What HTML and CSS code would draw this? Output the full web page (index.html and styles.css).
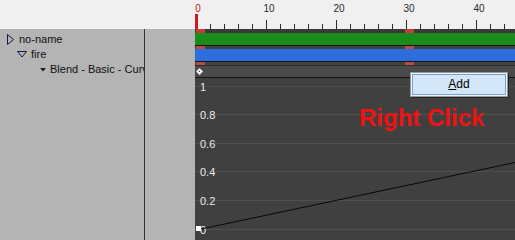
FILE: index.html
```html
<!DOCTYPE html>
<html lang="en">
<head>
    <meta charset="UTF-8">
    <title>Curve Editor</title>
    <link rel="stylesheet" href="styles.css">
</head>
<body>
    <div class="app">
        <div class="header">
            <div class="header-side"></div>
            <svg class="ruler" width="320" height="29" shape-rendering="crispEdges">
                <rect x="0" y="14" width="3" height="15" fill="#d01818"/>
                <text x="3" y="12" class="ruler-zero">0</text>
                <text x="74" y="12">10</text>
                <text x="144" y="12">20</text>
                <text x="214" y="12">30</text>
                <text x="284" y="12">40</text>
                <path class="ticks" d="M15.5 24V29 M29.5 24V29 M43.5 24V29 M57.5 24V29 M71.5 20V29 M85.5 24V29 M99.5 24V29 M113.5 24V29 M127.5 24V29 M141.5 20V29 M155.5 24V29 M169.5 24V29 M183.5 24V29 M197.5 24V29 M211.5 20V29 M225.5 24V29 M239.5 24V29 M253.5 24V29 M267.5 24V29 M281.5 20V29 M295.5 24V29 M309.5 24V29"/>
            </svg>
        </div>

        <div class="main">
            <div class="tree">
                <div class="tree-row level-1">
                    <svg class="toggle" width="7" height="11"><polygon points="0.5,0.5 6.5,5.5 0.5,10.5" fill="none" stroke="#141450"/></svg>
                    <span>no-name</span>
                </div>
                <div class="tree-row level-2">
                    <svg class="toggle" width="10" height="7"><polygon points="0.5,0.5 9.5,0.5 5,6" fill="none" stroke="#141450"/></svg>
                    <span>fire</span>
                </div>
                <div class="tree-row level-3">
                    <svg class="toggle" width="6" height="4"><polygon points="0,0 6,0 3,3.5" fill="#202020"/></svg>
                    <span>Blend - Basic - Curve</span>
                </div>
            </div>
            <div class="divider"></div>
            <div class="gutter"></div>

            <div class="timeline">
                <div class="strip">
                    <i class="mark mark-start"></i>
                    <i class="mark mark-30"></i>
                </div>
                <div class="bar bar-green"></div>
                <div class="gap">
                    <i class="mark mark-start"></i>
                    <i class="mark mark-30"></i>
                </div>
                <div class="bar bar-blue"></div>
                <div class="gap">
                    <i class="mark mark-start"></i>
                    <i class="mark mark-30"></i>
                </div>
                <div class="key-row">
                    <svg class="key" width="7" height="7"><polygon points="3.5,0 7,3.5 3.5,7 0,3.5" fill="#f4f4f4"/><rect x="3" y="3" width="1" height="1" fill="#333"/></svg>
                </div>
                <svg class="graph" width="320" height="162">
                    <g class="grid" shape-rendering="crispEdges">
                        <line x1="0" y1="8.5" x2="320" y2="8.5"/>
                        <line x1="0" y1="36.5" x2="320" y2="36.5"/>
                        <line x1="0" y1="65.5" x2="320" y2="65.5"/>
                        <line x1="0" y1="93.5" x2="320" y2="93.5"/>
                        <line x1="0" y1="122.5" x2="320" y2="122.5"/>
                        <line x1="0" y1="151.5" x2="320" y2="151.5"/>
                    </g>
                    <g class="values">
                        <text x="5" y="13">1</text>
                        <text x="5" y="41">0.8</text>
                        <text x="5" y="70">0.6</text>
                        <text x="5" y="98">0.4</text>
                        <text x="5" y="127">0.2</text>
                        <text x="5" y="156">0</text>
                    </g>
                    <line class="curve" x1="6" y1="151" x2="320" y2="84.5"/>
                    <rect x="1" y="148" width="5" height="5" fill="#ffffff"/>
                </svg>

                <div class="menu">
                    <div class="menu-item"><u>A</u>dd</div>
                </div>
                <div class="hint">Right Click</div>
            </div>
        </div>
    </div>
</body>
</html>
```

FILE: styles.css
```css
* {
    margin: 0;
    padding: 0;
    box-sizing: border-box;
}

body {
    background: #f0f0f0;
    font-family: "Liberation Sans", Arial, sans-serif;
}

.app {
    width: 515px;
    height: 240px;
    overflow: hidden;
}

.header {
    display: flex;
    height: 29px;
    background: #f0f0f0;
}

.header-side {
    width: 195px;
}

.ruler {
    display: block;
}

.ruler text {
    font-family: "Liberation Sans", Arial, sans-serif;
    font-size: 10px;
    fill: #2a2a2a;
    text-anchor: middle;
}

.ruler .ruler-zero {
    fill: #d01818;
}

.ticks {
    stroke: #2a2a2a;
    stroke-width: 1;
}

.main {
    display: flex;
    height: 211px;
}

.tree {
    width: 144px;
    background: #b4b4b4;
    padding-top: 3px;
    overflow: hidden;
    white-space: nowrap;
}

.tree-row {
    display: flex;
    align-items: center;
    height: 15px;
    font-size: 11px;
    line-height: 15px;
    color: #101010;
}

.toggle {
    flex: none;
    display: block;
}

.level-1 {
    padding-left: 7px;
    gap: 5px;
}

.level-2 {
    padding-left: 17px;
    gap: 4px;
}

.level-3 {
    padding-left: 40px;
    gap: 4px;
}

.divider {
    width: 1px;
    background: #333333;
}

.gutter {
    width: 50px;
    background: #b4b4b4;
}

.timeline {
    position: relative;
    width: 320px;
    display: flex;
    flex-direction: column;
    background: #404040;
}

.strip {
    position: relative;
    height: 4px;
    background: #3a3a3a;
}

.gap {
    position: relative;
    height: 3px;
    background: #424242;
}

.mark {
    position: absolute;
    top: 0;
    height: 100%;
    width: 9px;
    background: #b84c4c;
}

.strip .mark {
    background: #c83a3a;
}

.mark-start {
    left: 1px;
}

.mark-30 {
    left: 210px;
}

.bar {
    height: 13px;
    border-bottom: 1px solid #141414;
}

.bar-green {
    background: #1a8c1c;
}

.bar-blue {
    background: #2e6ddc;
}

.key-row {
    height: 13px;
    padding: 2px 0 0 1px;
    background: #4a4a4a;
    border-top: 1px solid #2c2c2c;
    border-bottom: 1px solid #141414;
}

.key {
    display: block;
}

.graph {
    display: block;
}

.grid line {
    stroke: #4f4f4f;
    stroke-width: 1;
}

.values text {
    font-family: "Liberation Sans", Arial, sans-serif;
    font-size: 11px;
    fill: #ececec;
}

.curve {
    stroke: #080808;
    stroke-width: 1;
}

.menu {
    position: absolute;
    left: 215px;
    top: 43px;
    width: 98px;
    height: 25px;
    padding: 1px;
    background: #f4f4f4;
    border: 1px solid #979797;
    box-shadow: 1px 1px 0 rgba(0, 0, 0, 0.4);
}

.menu-item {
    height: 21px;
    border: 1px solid #6fa3da;
    background: #d3e6fa;
    font-size: 12px;
    line-height: 19px;
    text-align: center;
    color: #000;
}

.hint {
    position: absolute;
    left: 164px;
    top: 77px;
    font-family: "Liberation Sans", Arial, sans-serif;
    font-weight: bold;
    font-size: 24px;
    line-height: 24px;
    color: #f01212;
    white-space: nowrap;
}
```
